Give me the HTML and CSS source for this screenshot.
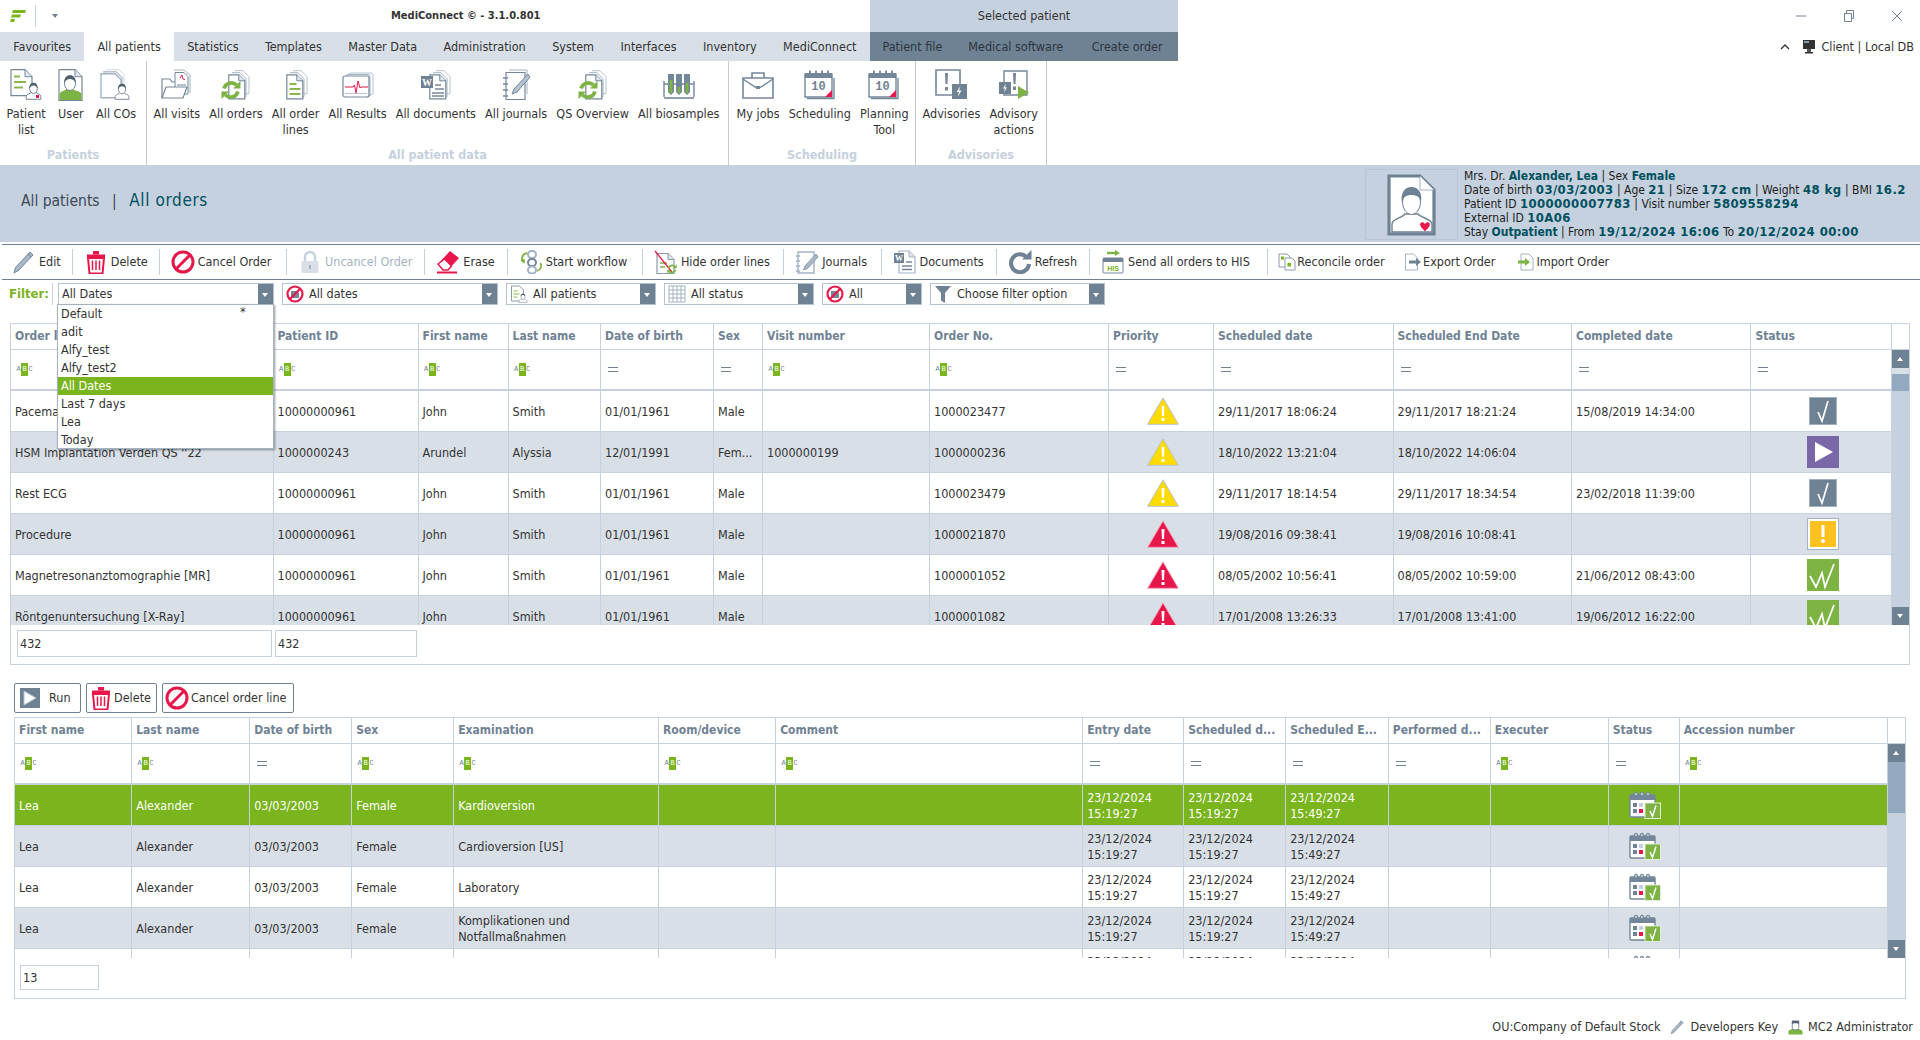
FILE: index.html
```html
<!DOCTYPE HTML>
<html lang="en-US">
<head>
	<meta charset="UTF-8">
	<title>MediConnect</title>
	<link rel="stylesheet" href="styles.css">
</head>
<body>

<!-- icon sheet -->
<svg class="sheet" xmlns="http://www.w3.org/2000/svg">
	<symbol id="person" viewBox="0 0 16 18">
		<path d="M.7 17.3v-3c0-2 4-2.600 5-4h4.600c1 1.400 5 2 5 4v3z" fill="#fff" stroke="#74879a"/>
		<ellipse cx="8" cy="6.500" rx="3.800" ry="5" fill="#fff" stroke="#74879a"/>
		<path d="M4 6.500C3.600 2 6 .8 8 .8s4.400 1.200 4 5.700c-1-2-2-3-4-3s-3 1-4 3z" fill="#4f6070"/>
	</symbol>
	<symbol id="pages" viewBox="0 0 22 30">
		<path d="M7 .7h8l6 6v17h-3" fill="#fff" stroke="#b4c2d0"/>
		<path d="M4 2.700h8l6 6v18h-3" fill="#fff" stroke="#a2b3c3"/>
		<path d="M.8 4.800h10l6 6v18H.8z" fill="#fff" stroke="#74879a" stroke-width="1.200"/>
		<path d="M10.800 4.800v6h6" fill="#dfe6ec" stroke="#74879a"/>
	</symbol>
	<symbol id="sync" viewBox="0 0 20 20">
		<path d="M3 8.500A7.500 7.500 0 0 1 15.500 5" fill="none" stroke="#7cb342" stroke-width="3.600"/>
		<path d="M12 8.500h7.500V1z" fill="#7cb342"/>
		<path d="M17 11.500A7.500 7.500 0 0 1 4.500 15" fill="none" stroke="#7cb342" stroke-width="3.600"/>
		<path d="M8 11.500H.5V19z" fill="#7cb342"/>
	</symbol>
	<symbol id="r-patient" viewBox="0 0 32 32">
		<path d="M1 .7h14l7 7v19H1z" fill="#fff" stroke="#74879a" stroke-width="1.200"/>
		<path d="M15 .7v7h7" fill="#dfe6ec" stroke="#74879a"/>
		<path d="M4 7.500h6M4 13h12M4 18.500h9" stroke="#8ab84a" stroke-width="2"/>
		<use href="#person" x="15" y="13" width="17" height="18"/>
		<rect x="26" y="26" width="3" height="3" fill="#e8174b"/>
	</symbol>
	<symbol id="r-user" viewBox="0 0 32 32">
		<path d="M4 .7h16l7 7v23.600H4z" fill="#fff" stroke="#74879a" stroke-width="1.200"/>
		<path d="M20 .7v7h7" fill="#dfe6ec" stroke="#74879a"/>
		<path d="M4.600 31v-6c0-2.500 5-3 7-5h6c2 2 8.800 2.500 8.800 5v6z" fill="#7cb342"/>
		<ellipse cx="15" cy="14" rx="5.500" ry="7.500" fill="#fff" stroke="#74879a"/>
		<path d="M9.500 14C9 8 12 6.500 15 6.500s6 1.500 5.500 7.500c-1-3-3-4-5.500-4s-4.500 1-5.500 4z" fill="#4f6070"/>
	</symbol>
	<symbol id="r-cos" viewBox="0 0 32 32">
		<path d="M7 .7h12l5 5v18" fill="#fff" stroke="#cfd8e0"/>
		<path d="M4 2.700h12l6 6v18H4z" fill="#fff" stroke="#b4c2d0" stroke-width="1.400"/>
		<path d="M1 4.700h14l6 6v18H1z" fill="#fff" stroke="#a2b3c3" stroke-width="1.400"/>
		<use href="#person" x="14" y="14" width="16" height="17"/>
	</symbol>
	<symbol id="r-visits" viewBox="0 0 32 32">
		<path d="M13 1h10l6 5v18" fill="#fff" stroke="#a2b3c3"/>
		<path d="M1 29V10h8l2 3h12v4" fill="#fff" stroke="#74879a" stroke-width="1.200"/>
		<path d="M14 3.500h9l4 4V25H14z" fill="#fff" stroke="#74879a"/>
		<path d="M16 16h9M16 19h9M16 22h6" stroke="#74879a"/>
		<path d="M19 9l2-3 1 4 2 .5" stroke="#e8174b" fill="none"/>
		<path d="M1 29l4-11h21l-4 11z" fill="#fff" stroke="#74879a" stroke-width="1.200"/>
	</symbol>
	<symbol id="r-orders" viewBox="0 0 32 32">
		<use href="#pages" x="8" y="1" width="22" height="30"/>
		<use href="#sync" x="1" y="11" width="20" height="20"/>
	</symbol>
	<symbol id="r-lines" viewBox="0 0 32 32">
		<use href="#pages" x="6" y="1" width="22" height="30"/>
		<path d="M9.500 15h7M9.500 20h11M9.500 25h11" stroke="#8ab84a" stroke-width="2"/>
	</symbol>
	<symbol id="r-results" viewBox="0 0 32 32">
		<rect x="7" y="4" width="24" height="22" rx="2" fill="#fff" stroke="#b4c2d0"/>
		<rect x="4" y="5.500" width="24" height="22" rx="2" fill="#fff" stroke="#a2b3c3"/>
		<rect x="1" y="7" width="26" height="21" rx="2" fill="#fff" stroke="#74879a" stroke-width="1.200"/>
		<path d="M3 18h8l1.500-2 1.500 8 2-12 2 7 1-1h7" fill="none" stroke="#e8174b"/>
		<path d="M3 24.500h22" stroke="#b4c2d0"/>
	</symbol>
	<symbol id="r-docs" viewBox="0 0 32 32">
		<use href="#pages" x="9" y="1" width="22" height="30"/>
		<rect x="1" y="7" width="12" height="12" fill="#6f8294"/>
		<text x="7" y="16.500" class="w-letter" text-anchor="middle">W</text>
		<path d="M15 16h6M15 20h9M12 24h12M12 27h12" stroke="#74879a" stroke-width="1.300"/>
	</symbol>
	<symbol id="r-journals" viewBox="0 0 32 32">
		<path d="M9 1h18v24" fill="#fff" stroke="#a2b3c3"/>
		<path d="M6 3.500h19v27H6z" fill="#fff" stroke="#74879a" stroke-width="1.200"/>
		<path d="M3 9h5M3 15h5M3 21h5M3 27h5" stroke="#74879a" stroke-width="1.300"/>
		<path d="M28 5L14 20l-2 5 5-2L30 8z" fill="#b4c2d0" stroke="#74879a"/>
	</symbol>
	<symbol id="r-tubes" viewBox="0 0 32 32">
		<path d="M1 28V12M31 28V12M1 15h30" fill="none" stroke="#74879a" stroke-width="1.400"/>
		<path d="M1 29h30" stroke="#74879a" stroke-width="1.600"/>
		<path d="M5 5h6v18l-3 3-3-3zM13 5h6v18l-3 3-3-3zM21 5h6v18l-3 3-3-3z" fill="#74879a"/>
		<path d="M6.500 11h3v12l-1.500 2-1.500-2zM14.500 18h3v5l-1.500 2-1.500-2zM22.500 14h3v9l-1.500 2-1.500-2z" fill="#7cb342"/>
	</symbol>
	<symbol id="r-jobs" viewBox="0 0 32 32">
		<path d="M10 9V4h12v5" fill="none" stroke="#74879a" stroke-width="1.600"/>
		<path d="M1 9h30v20H1z" fill="#fff" stroke="#74879a" stroke-width="1.600"/>
		<path d="M1 10l12 8h6l12-8" fill="none" stroke="#74879a" stroke-width="1.400"/>
		<rect x="14" y="17" width="4" height="3" fill="#74879a"/>
	</symbol>
	<symbol id="r-cal" viewBox="0 0 32 32">
		<path d="M3 29.500h27V9" fill="#fff" stroke="#74879a" stroke-width="1.400"/>
		<path d="M1 5h27v23H1z" fill="#fff" stroke="#74879a" stroke-width="1.400"/>
		<rect x="1" y="4" width="27" height="5" fill="#74879a"/>
		<path d="M6 1.500v5M12 1.500v5M18 1.500v5M24 1.500v5" stroke="#74879a" stroke-width="1.800"/>
		<text x="14.500" y="21" class="cal-num" text-anchor="middle">10</text>
		<path d="M28 21v7h-7z" fill="#e8174b"/>
	</symbol>
	<symbol id="r-adv" viewBox="0 0 32 32">
		<path d="M1 1h24v25H1z" fill="#fff" stroke="#74879a" stroke-width="1.600"/>
		<path d="M10 4h3l-.5 11h-2z" fill="#74879a"/>
		<rect x="10" y="18" width="3" height="3.500" fill="#74879a"/>
		<rect x="17" y="15" width="15" height="15" fill="#6f8294"/>
		<path d="M25.500 17l-4 6h2.500l-1.500 5 4-6.500h-2.500z" fill="#fff"/>
	</symbol>
	<symbol id="r-advact" viewBox="0 0 32 32">
		<path d="M6 2h23v24H6z" fill="#fff" stroke="#74879a" stroke-width="1.400"/>
		<path d="M15 4h3l-.5 11h-2z" fill="#74879a"/>
		<rect x="15" y="17.500" width="3" height="3.500" fill="#74879a"/>
		<rect x="1" y="13" width="12" height="12" fill="#6f8294"/>
		<path d="M8 14.500l-3 5h2l-1 4 3-5H7z" fill="#fff"/>
		<path d="M20 17l11 6.500L20 30z" fill="#7cb342"/>
	</symbol>

	<symbol id="t-edit" viewBox="0 0 24 24">
		<path d="M18 2l3 3L7 20l-5 3 1.500-5.500z" fill="#a9b8c7" stroke="#74879a"/>
		<path d="M16 4l3 3" stroke="#74879a"/>
	</symbol>
	<symbol id="t-trash" viewBox="0 0 24 24">
		<path d="M3 4.500h18v2.500H3z" fill="#e8174b"/>
		<rect x="9" y="1" width="6" height="3.500" fill="#e8174b"/>
		<path d="M4 8h16l-1.500 15.500h-13z" fill="#fff" stroke="#e8174b" stroke-width="2"/>
		<path d="M8.500 10.500v9.500M12 10.500v9.500M15.500 10.500v9.500" stroke="#e8174b" stroke-width="1.500"/>
	</symbol>
	<symbol id="t-cancel" viewBox="0 0 24 24">
		<circle cx="12" cy="12" r="10" fill="#fff" stroke="#e8174b" stroke-width="3"/>
		<path d="M19 5L5 19" stroke="#e8174b" stroke-width="3"/>
	</symbol>
	<symbol id="t-lock" viewBox="0 0 24 24">
		<path d="M7 11V7a5 5 0 0 1 10 0v4" fill="none" stroke="#c5d1de" stroke-width="2.400"/>
		<rect x="3.500" y="11" width="17" height="12" rx="1" fill="#d8dfe7"/>
		<rect x="11" y="15" width="2" height="4" fill="#a2b3c3"/>
	</symbol>
	<symbol id="t-erase" viewBox="0 0 24 24">
		<path d="M2 14L14 1l9 7-11 12H7z" fill="#e8174b"/>
		<path d="M2 14l5 6h5l3.500-4-7-7z" fill="#fff" stroke="#e8174b" stroke-width="1.500"/>
		<path d="M1 22.500h20" stroke="#e8174b" stroke-width="2"/>
	</symbol>
	<symbol id="t-flow" viewBox="0 0 24 24">
		<rect x="9" y="1" width="8" height="7" rx="3.500" fill="none" stroke="#a2b3c3" stroke-width="2"/>
		<rect x="9" y="9" width="8" height="7" rx="3.500" fill="none" stroke="#74879a" stroke-width="2"/>
		<rect x="9" y="16.500" width="8" height="7" rx="3.500" fill="none" stroke="#a2b3c3" stroke-width="2"/>
		<path d="M8 3C3 4 2 9 4 12" fill="none" stroke="#7cb342" stroke-width="1.800"/>
		<path d="M1.500 10l4 4 .5-5z" fill="#7cb342"/>
		<path d="M18 21c4-1 5-5 3.500-8" fill="none" stroke="#7cb342" stroke-width="1.800"/>
	</symbol>
	<symbol id="t-hide" viewBox="0 0 24 24">
		<path d="M3 3.500h11l6 6v14H3z" fill="#fff" stroke="#8a9bac" stroke-width="1.200"/>
		<path d="M14 3.500v6h6" fill="#dfe6ec" stroke="#8a9bac"/>
		<path d="M6 13h7M6 17h5" stroke="#7cb342" stroke-width="1.500"/>
		<path d="M1 1l17 21" stroke="#e8174b" stroke-width="1.300"/>
		<use href="#sync" x="13" y="14" width="10" height="10"/>
	</symbol>
	<symbol id="t-journal" viewBox="0 0 24 24">
		<path d="M3 2h16v21H3z" fill="#fff" stroke="#a2b3c3" stroke-width="1.400"/>
		<path d="M1 6h4M1 11h4M1 16h4M1 21h4" stroke="#a2b3c3" stroke-width="1.300"/>
		<path d="M21 4L10 16l-1.500 4 4-1.500L23 7z" fill="#a9b8c7" stroke="#8a9bac"/>
	</symbol>
	<symbol id="t-doc" viewBox="0 0 24 24">
		<path d="M6 1h10l6 6v16H6z" fill="#fff" stroke="#a2b3c3" stroke-width="1.200"/>
		<path d="M16 1v6h6" fill="#dfe6ec" stroke="#a2b3c3"/>
		<rect x="1" y="3" width="10" height="10" fill="#6f8294"/>
		<text x="6" y="11" class="w-small" text-anchor="middle">W</text>
		<path d="M13 12h6M9 16h10M9 19.500h10" stroke="#74879a" stroke-width="1.300"/>
	</symbol>
	<symbol id="t-refresh" viewBox="0 0 24 24">
		<path d="M19 7.500A9 9 0 1 0 21 14" fill="none" stroke="#6f8294" stroke-width="4"/>
		<path d="M14 9.500h9.500V0z" fill="#6f8294"/>
	</symbol>
	<symbol id="t-send" viewBox="0 0 24 24">
		<path d="M6 3h9" stroke="#7cb342" stroke-width="2.400"/>
		<path d="M14 0l5 3-5 3z" fill="#7cb342"/>
		<rect x="2" y="8" width="20" height="15" rx="1" fill="#fff" stroke="#74879a"/>
		<rect x="2" y="8" width="20" height="4" fill="#6f8294"/>
		<text x="12" y="21" class="his" text-anchor="middle">HIS</text>
	</symbol>
	<symbol id="t-reconcile" viewBox="0 0 18 18">
		<path d="M1 1h8l3 3v10H1z" fill="#fff" stroke="#8a9bac"/>
		<path d="M7 5h7l3 3v9H7z" fill="#fff" stroke="#8a9bac"/>
		<rect x="3" y="3.500" width="3" height="3" fill="#7ab51d"/>
		<rect x="9.500" y="10" width="3.500" height="3.500" fill="#7ab51d"/>
	</symbol>
	<symbol id="t-export" viewBox="0 0 18 18">
		<path d="M1.500 1h8l4 4v12h-12z" fill="#fff" stroke="#a2b3c3"/>
		<path d="M5 7.500h7V5l5 4-5 4v-2.500H5z" fill="#6f8294"/>
	</symbol>
	<symbol id="t-import" viewBox="0 0 18 18">
		<path d="M4 1h8l4 4v12H4z" fill="#fff" stroke="#a2b3c3"/>
		<path d="M1 7.500h7V5l5 4-5 4v-2.500H1z" fill="#7cb342"/>
	</symbol>

	<symbol id="f-none" viewBox="0 0 18 18">
		<circle cx="9" cy="9" r="7.500" fill="#fff" stroke="#e8174b" stroke-width="2.200"/>
		<path d="M5 6h6l2 2v5H5z" fill="#74879a"/>
		<path d="M14 4L4 14" stroke="#e8174b" stroke-width="2.200"/>
	</symbol>
	<symbol id="f-patients" viewBox="0 0 18 18">
		<path d="M1.500 1h8l4 4v11h-12z" fill="#fff" stroke="#8a9bac"/>
		<path d="M3.500 6h4M3.500 9h6M3.500 12h4" stroke="#8ab84a"/>
		<use href="#person" x="8" y="8" width="10" height="10"/>
	</symbol>
	<symbol id="f-status" viewBox="0 0 18 18">
		<rect x="1" y="1" width="16" height="16" fill="#fff" stroke="#a2b3c3"/>
		<path d="M1 5h16M1 9h16M1 13h16M5 1v16M9 1v16M13 1v16" stroke="#a2b3c3"/>
	</symbol>
	<symbol id="f-funnel" viewBox="0 0 18 18">
		<path d="M1 1h16l-6 7v10l-4-2.500V8z" fill="#6f8294"/>
	</symbol>

	<symbol id="s-warn" viewBox="0 0 32 28">
		<path d="M16 .8L31.400 27.300H.6z" fill="#ffdb00" stroke="#b4c2d0"/>
		<path d="M14.500 9h3l-.5 10h-2z" fill="#fff"/>
		<rect x="14.500" y="21" width="3" height="3" fill="#fff"/>
	</symbol>
	<symbol id="s-alert" viewBox="0 0 32 28">
		<path d="M16 .8L31.400 27.300H.6z" fill="#e8174b" stroke="#f3a8bd"/>
		<path d="M14.500 9h3l-.5 10h-2z" fill="#fff"/>
		<rect x="14.500" y="21" width="3" height="3" fill="#fff"/>
	</symbol>
	<symbol id="s-done" viewBox="0 0 32 32">
		<rect x="2.500" y="2.500" width="27" height="27" fill="#6f8294" stroke="#9fb0c0"/>
		<path d="M11 17l4 9 6-20" fill="none" stroke="#fff" stroke-width="1.700"/>
	</symbol>
	<symbol id="s-run" viewBox="0 0 32 32">
		<rect width="32" height="32" fill="#7a67a8"/>
		<path d="M8 6l18 10L8 26z" fill="#fff"/>
	</symbol>
	<symbol id="s-warnbox" viewBox="0 0 32 32">
		<rect x=".5" y=".5" width="31" height="31" fill="#fff" stroke="#a2b3c3"/>
		<rect x="3" y="3" width="26" height="26" fill="#fdc220"/>
		<rect x="14.500" y="7" width="3" height="12" fill="#fff"/>
		<circle cx="16" cy="23" r="2" fill="#fff"/>
	</symbol>
	<symbol id="s-dbl" viewBox="0 0 32 32">
		<rect width="32" height="32" fill="#7cb342"/>
		<path d="M3 17l6 11 6-14 3 14 9-23" fill="none" stroke="#fff" stroke-width="1.800"/>
	</symbol>
	<symbol id="s-cal" viewBox="0 0 32 28">
		<rect x="1" y="4" width="25" height="22" rx="1" fill="#fff" stroke="#74879a" stroke-width="1.400"/>
		<rect x="1" y="4" width="25" height="5" fill="#74879a"/>
		<circle cx="7" cy="3" r="1.800" fill="#b4c2d0" stroke="#74879a"/>
		<circle cx="13" cy="3" r="1.800" fill="#b4c2d0" stroke="#74879a"/>
		<circle cx="19" cy="3" r="1.800" fill="#b4c2d0" stroke="#74879a"/>
		<rect x="4" y="12" width="4" height="4" fill="#6f8294"/>
		<rect x="10" y="12" width="4" height="4" fill="#c5d1de"/>
		<rect x="4" y="18" width="4" height="4" fill="#6f8294"/>
		<rect x="10" y="18" width="4" height="4" fill="#e8174b"/>
		<rect x="16" y="12" width="15.500" height="15.500" fill="#7cb342" stroke="#e4ecd8"/>
		<path d="M21 20l2.500 5.500 3.500-11" fill="none" stroke="#fff" stroke-width="1.400"/>
	</symbol>
	<symbol id="play" viewBox="0 0 20 20">
		<rect width="20" height="20" fill="#6f8294"/>
		<path d="M4 3l12 7-12 7z" fill="#fff" stroke="#b4c2d0"/>
	</symbol>
	<symbol id="admin" viewBox="0 0 16 16">
		<path d="M.5 16v-3c0-2 4-2.500 5-4h5c1 1.500 5 2 5 4v3z" fill="#7cb342"/>
		<path d="M4.500 1.500h7v7c0 1.500-1.500 2.500-3.500 2.500S4.500 10 4.500 8.500z" fill="#fff" stroke="#74879a"/>
		<path d="M4.500 5V1.500h7V5c-1-1-2.500-1-3.500-1S5.500 4 4.500 5z" fill="#4f6070"/>
	</symbol>
</svg>

<div class="titlebar">
	<div class="logo-box">
		<svg class="logo" viewBox="0 0 16 12"><path d="M3 0h13l-1 3H2zM2 4.500h9l-1 3H1zM1 9h4l-1 3H0z" fill="#7ab51d"/></svg>
		<i class="title-sep"></i>
		<i class="qa-arrow"></i>
	</div>
	<div class="app-title">MediConnect © - 3.1.0.801</div>
	<div class="context-head">Selected patient</div>
	<div class="win-btns">
		<svg class="win-ic" viewBox="0 0 12 12"><path d="M1 6h10" stroke="#6f8294"/></svg>
		<svg class="win-ic" viewBox="0 0 12 12"><path d="M1.500 3.500h7v8h-7zM3.500 3V.5h7v8H9" fill="none" stroke="#6f8294"/></svg>
		<svg class="win-ic" viewBox="0 0 12 12"><path d="M1 1l10 10M11 1L1 11" stroke="#6f8294"/></svg>
	</div>
</div>

<div class="tabs">
	<div class="tab">Favourites</div>
	<div class="tab active">All patients</div>
	<div class="tab">Statistics</div>
	<div class="tab">Templates</div>
	<div class="tab">Master Data</div>
	<div class="tab">Administration</div>
	<div class="tab">System</div>
	<div class="tab">Interfaces</div>
	<div class="tab">Inventory</div>
	<div class="tab">MediConnect</div>
	<div class="context-tabs">
		<div class="tab">Patient file</div>
		<div class="tab">Medical software</div>
		<div class="tab">Create order</div>
	</div>
	<div class="conn">
		<svg class="chev" viewBox="0 0 10 6"><path d="M1 5l4-4 4 4" fill="none" stroke="#333" stroke-width="1.400"/></svg>
		<svg class="monitor" viewBox="0 0 14 14"><rect x="1" width="12" height="9" fill="#333"/><rect x="2" y="1" width="5" height="2" fill="#8a9bac"/><rect x="5" y="9" width="4" height="3" fill="#555"/><rect x="3" y="12" width="8" height="1.500" fill="#333"/></svg>
		<span>Client | Local DB</span>
	</div>
</div>

<div class="ribbon">
	<div class="rgroup g-patients">
		<div class="ritems">
			<div class="ritem"><svg class="ric"><use href="#r-patient"/></svg>Patient<br>list</div>
			<div class="ritem"><svg class="ric"><use href="#r-user"/></svg>User</div>
			<div class="ritem"><svg class="ric"><use href="#r-cos"/></svg>All COs</div>
		</div>
		<div class="rlabel">Patients</div>
	</div>
	<div class="rgroup g-data">
		<div class="ritems">
			<div class="ritem"><svg class="ric"><use href="#r-visits"/></svg>All visits</div>
			<div class="ritem"><svg class="ric"><use href="#r-orders"/></svg>All orders</div>
			<div class="ritem"><svg class="ric"><use href="#r-lines"/></svg>All order<br>lines</div>
			<div class="ritem"><svg class="ric"><use href="#r-results"/></svg>All Results</div>
			<div class="ritem"><svg class="ric"><use href="#r-docs"/></svg>All documents</div>
			<div class="ritem"><svg class="ric"><use href="#r-journals"/></svg>All journals</div>
			<div class="ritem"><svg class="ric"><use href="#r-orders"/></svg>QS Overview</div>
			<div class="ritem"><svg class="ric"><use href="#r-tubes"/></svg>All biosamples</div>
		</div>
		<div class="rlabel">All patient data</div>
	</div>
	<div class="rgroup g-sched">
		<div class="ritems">
			<div class="ritem"><svg class="ric"><use href="#r-jobs"/></svg>My jobs</div>
			<div class="ritem"><svg class="ric"><use href="#r-cal"/></svg>Scheduling</div>
			<div class="ritem"><svg class="ric"><use href="#r-cal"/></svg>Planning<br>Tool</div>
		</div>
		<div class="rlabel">Scheduling</div>
	</div>
	<div class="rgroup g-adv">
		<div class="ritems">
			<div class="ritem"><svg class="ric"><use href="#r-adv"/></svg>Advisories</div>
			<div class="ritem"><svg class="ric"><use href="#r-advact"/></svg>Advisory<br>actions</div>
		</div>
		<div class="rlabel">Advisories</div>
	</div>
</div>

<div class="pagebar">
	<div class="crumb">All patients<span class="crumb-sep">|</span><span class="crumb-cur">All orders</span></div>
	<div class="pinfo">
		<div class="pphoto">
			<svg class="pphoto-ic" viewBox="0 0 49 62">
				<path d="M2 2h31l14 14v44H2z" fill="#fff" stroke="#6f8294" stroke-width="3.200"/>
				<path d="M33 2v14h14z" fill="#fff" stroke="#a2b3c3"/>
				<path d="M5 58v-8c0-5 10-6 13-10h13c3 4 14 5 14 10v8z" fill="#fff" stroke="#6f8294" stroke-width="1.400"/>
				<ellipse cx="24.500" cy="28" rx="9" ry="12.500" fill="#fff" stroke="#6f8294"/>
				<path d="M15 29C13 16 20 13 24.500 13S36 16 34 29c-1-6-4-8-9.500-8S16 23 15 29z" fill="#6f8294"/>
				<path d="M38 50c-2.500-3.500-6-1-4.500 2 1 2 3 3.500 4.500 5.500 1.500-2 3.500-3.500 4.500-5.500 1.500-3-2-5.500-4.500-2z" fill="#e8174b"/>
			</svg>
		</div>
		<div class="ptext">
			<div>Mrs. Dr. <b class="nm">Alexander, Lea</b> | Sex <b class="nm">Female</b></div>
			<div>Date of birth <b>03/03/2003</b> | Age <b>21</b> | Size <b>172 cm</b> | Weight <b>48 kg</b> | BMI <b>16.2</b></div>
			<div>Patient ID <b>1000000007783</b> | Visit number <b>5809558294</b></div>
			<div>External ID <b>10A06</b></div>
			<div>Stay <b class="nm">Outpatient</b> | From <b>19/12/2024 16:06</b> To <b>20/12/2024 00:00</b></div>
		</div>
	</div>
</div>

<div class="toolbar">
	<div class="tb-item first-item"><svg class="tic"><use href="#t-edit"/></svg>Edit</div>
	<div class="tb-item"><svg class="tic"><use href="#t-trash"/></svg>Delete</div>
	<div class="tb-item x4"><svg class="tic"><use href="#t-cancel"/></svg>Cancel Order</div>
	<div class="tb-item x1 off"><svg class="tic"><use href="#t-lock"/></svg>Uncancel Order</div>
	<div class="tb-item x1"><svg class="tic"><use href="#t-erase"/></svg>Erase</div>
	<div class="tb-item x4"><svg class="tic"><use href="#t-flow"/></svg>Start workflow</div>
	<div class="tb-item x2"><svg class="tic"><use href="#t-hide"/></svg>Hide order lines</div>
	<div class="tb-item x2"><svg class="tic"><use href="#t-journal"/></svg>Journals</div>
	<div class="tb-item x1"><svg class="tic"><use href="#t-doc"/></svg>Documents</div>
	<div class="tb-item x1"><svg class="tic"><use href="#t-refresh"/></svg>Refresh</div>
	<div class="tb-item x6"><svg class="tic"><use href="#t-send"/></svg>Send all orders to HIS</div>
	<div class="tb-item plain"><svg class="tic-s"><use href="#t-reconcile"/></svg>Reconcile order</div>
	<div class="tb-item plain x2"><svg class="tic-s"><use href="#t-export"/></svg>Export Order</div>
	<div class="tb-item plain"><svg class="tic-s"><use href="#t-import"/></svg>Import Order</div>
</div>

<div class="filterbar">
	<div class="f-label">Filter:</div>
	<div class="combo w216 first"><span>All Dates</span><i class="combo-arrow"></i></div>
	<div class="combo w216"><svg class="fic"><use href="#f-none"/></svg><span>All dates</span><i class="combo-arrow"></i></div>
	<div class="combo w150"><svg class="fic"><use href="#f-patients"/></svg><span>All patients</span><i class="combo-arrow"></i></div>
	<div class="combo w150"><svg class="fic"><use href="#f-status"/></svg><span>All status</span><i class="combo-arrow"></i></div>
	<div class="combo w100"><svg class="fic"><use href="#f-none"/></svg><span>All</span><i class="combo-arrow"></i></div>
	<div class="combo w175"><svg class="fic"><use href="#f-funnel"/></svg><span>Choose filter option</span><i class="combo-arrow"></i></div>

	<div class="dropdown">
		<div class="dd-item">Default<span class="star">*</span></div>
		<div class="dd-item">adit</div>
		<div class="dd-item">Alfy_test</div>
		<div class="dd-item">Alfy_test2</div>
		<div class="dd-item sel">All Dates</div>
		<div class="dd-item">Last 7 days</div>
		<div class="dd-item">Lea</div>
		<div class="dd-item">Today</div>
	</div>
</div>

<!-- orders grid -->
<div class="grid orders">
	<div class="gr head">
		<div>Order line</div><div>Patient ID</div><div>First name</div><div>Last name</div><div>Date of birth</div><div>Sex</div><div>Visit number</div><div>Order No.</div><div>Priority</div><div>Scheduled date</div><div>Scheduled End Date</div><div>Completed date</div><div>Status</div><div></div>
	</div>
	<div class="grid-lower">
		<div class="grid-main">
			<div class="gr filt">
				<div><span class="abc"><i>A</i><b>B</b><i>C</i></span></div><div><span class="abc"><i>A</i><b>B</b><i>C</i></span></div><div><span class="abc"><i>A</i><b>B</b><i>C</i></span></div><div><span class="abc"><i>A</i><b>B</b><i>C</i></span></div><div><span class="eq"></span></div><div><span class="eq"></span></div><div><span class="abc"><i>A</i><b>B</b><i>C</i></span></div><div><span class="abc"><i>A</i><b>B</b><i>C</i></span></div><div><span class="eq"></span></div><div><span class="eq"></span></div><div><span class="eq"></span></div><div><span class="eq"></span></div><div><span class="eq"></span></div>
			</div>
			<div class="grid-body">
				<div class="gr row">
					<div>Pacemaker implantation</div><div>10000000961</div><div>John</div><div>Smith</div><div>01/01/1961</div><div>Male</div><div></div><div>1000023477</div><div class="mid"><svg class="prio"><use href="#s-warn"/></svg></div><div>29/11/2017 18:06:24</div><div>29/11/2017 18:21:24</div><div>15/08/2019 14:34:00</div><div class="mid"><svg class="stat"><use href="#s-done"/></svg></div>
				</div>
				<div class="gr row alt">
					<div>HSM Implantation Verden QS ''22</div><div>1000000243</div><div>Arundel</div><div>Alyssia</div><div>12/01/1991</div><div>Fem...</div><div>1000000199</div><div>1000000236</div><div class="mid"><svg class="prio"><use href="#s-warn"/></svg></div><div>18/10/2022 13:21:04</div><div>18/10/2022 14:06:04</div><div></div><div class="mid"><svg class="stat"><use href="#s-run"/></svg></div>
				</div>
				<div class="gr row">
					<div>Rest ECG</div><div>10000000961</div><div>John</div><div>Smith</div><div>01/01/1961</div><div>Male</div><div></div><div>1000023479</div><div class="mid"><svg class="prio"><use href="#s-warn"/></svg></div><div>29/11/2017 18:14:54</div><div>29/11/2017 18:34:54</div><div>23/02/2018 11:39:00</div><div class="mid"><svg class="stat"><use href="#s-done"/></svg></div>
				</div>
				<div class="gr row alt">
					<div>Procedure</div><div>10000000961</div><div>John</div><div>Smith</div><div>01/01/1961</div><div>Male</div><div></div><div>1000021870</div><div class="mid"><svg class="prio"><use href="#s-alert"/></svg></div><div>19/08/2016 09:38:41</div><div>19/08/2016 10:08:41</div><div></div><div class="mid"><svg class="stat"><use href="#s-warnbox"/></svg></div>
				</div>
				<div class="gr row">
					<div>Magnetresonanztomographie [MR]</div><div>10000000961</div><div>John</div><div>Smith</div><div>01/01/1961</div><div>Male</div><div></div><div>1000001052</div><div class="mid"><svg class="prio"><use href="#s-alert"/></svg></div><div>08/05/2002 10:56:41</div><div>08/05/2002 10:59:00</div><div>21/06/2012 08:43:00</div><div class="mid"><svg class="stat"><use href="#s-dbl"/></svg></div>
				</div>
				<div class="gr row alt">
					<div>Röntgenuntersuchung [X-Ray]</div><div>10000000961</div><div>John</div><div>Smith</div><div>01/01/1961</div><div>Male</div><div></div><div>1000001082</div><div class="mid"><svg class="prio"><use href="#s-alert"/></svg></div><div>17/01/2008 13:26:33</div><div>17/01/2008 13:41:00</div><div>19/06/2012 16:22:00</div><div class="mid"><svg class="stat"><use href="#s-dbl"/></svg></div>
				</div>
			</div>
		</div>
		<div class="vscroll short-thumb">
			<div class="sb-btn up"></div><div class="sb-gap"></div><div class="sb-thumb"></div><div class="sb-track"></div><div class="sb-btn down"></div>
		</div>
	</div>
	<div class="grid-foot orders-foot">
		<div class="sum s1">432</div>
		<div class="sum s2">432</div>
	</div>
</div>

<div class="line-btns">
	<div class="lbtn b-run"><svg class="play-ic"><use href="#play"/></svg>Run</div>
	<div class="lbtn b-del"><svg class="tic"><use href="#t-trash"/></svg>Delete</div>
	<div class="lbtn b-can"><svg class="tic"><use href="#t-cancel"/></svg>Cancel order line</div>
</div>

<!-- order lines grid -->
<div class="grid lines">
	<div class="gr head">
		<div>First name</div><div>Last name</div><div>Date of birth</div><div>Sex</div><div>Examination</div><div>Room/device</div><div>Comment</div><div>Entry date</div><div>Scheduled d...</div><div>Scheduled E...</div><div>Performed d...</div><div>Executer</div><div>Status</div><div>Accession number</div><div></div>
	</div>
	<div class="grid-lower">
		<div class="grid-main">
			<div class="gr filt">
				<div><span class="abc"><i>A</i><b>B</b><i>C</i></span></div><div><span class="abc"><i>A</i><b>B</b><i>C</i></span></div><div><span class="eq"></span></div><div><span class="abc"><i>A</i><b>B</b><i>C</i></span></div><div><span class="abc"><i>A</i><b>B</b><i>C</i></span></div><div><span class="abc"><i>A</i><b>B</b><i>C</i></span></div><div><span class="abc"><i>A</i><b>B</b><i>C</i></span></div><div><span class="eq"></span></div><div><span class="eq"></span></div><div><span class="eq"></span></div><div><span class="eq"></span></div><div><span class="abc"><i>A</i><b>B</b><i>C</i></span></div><div><span class="eq"></span></div><div><span class="abc"><i>A</i><b>B</b><i>C</i></span></div>
			</div>
			<div class="grid-body">
				<div class="gr row sel">
					<div>Lea</div><div>Alexander</div><div>03/03/2003</div><div>Female</div><div>Kardioversion</div><div></div><div></div><div class="wrap">23/12/2024 15:19:27</div><div class="wrap">23/12/2024 15:19:27</div><div class="wrap">23/12/2024 15:49:27</div><div></div><div></div><div class="mid"><svg class="calst"><use href="#s-cal"/></svg></div><div></div>
				</div>
				<div class="gr row alt">
					<div>Lea</div><div>Alexander</div><div>03/03/2003</div><div>Female</div><div>Cardioversion [US]</div><div></div><div></div><div class="wrap">23/12/2024 15:19:27</div><div class="wrap">23/12/2024 15:19:27</div><div class="wrap">23/12/2024 15:49:27</div><div></div><div></div><div class="mid"><svg class="calst"><use href="#s-cal"/></svg></div><div></div>
				</div>
				<div class="gr row">
					<div>Lea</div><div>Alexander</div><div>03/03/2003</div><div>Female</div><div>Laboratory</div><div></div><div></div><div class="wrap">23/12/2024 15:19:27</div><div class="wrap">23/12/2024 15:19:27</div><div class="wrap">23/12/2024 15:49:27</div><div></div><div></div><div class="mid"><svg class="calst"><use href="#s-cal"/></svg></div><div></div>
				</div>
				<div class="gr row alt">
					<div>Lea</div><div>Alexander</div><div>03/03/2003</div><div>Female</div><div class="wrap">Komplikationen und Notfallmaßnahmen</div><div></div><div></div><div class="wrap">23/12/2024 15:19:27</div><div class="wrap">23/12/2024 15:19:27</div><div class="wrap">23/12/2024 15:49:27</div><div></div><div></div><div class="mid"><svg class="calst"><use href="#s-cal"/></svg></div><div></div>
				</div>
				<div class="gr row">
					<div>Lea</div><div>Alexander</div><div>03/03/2003</div><div>Female</div><div>Holter ECG</div><div></div><div></div><div class="wrap">23/12/2024 15:19:27</div><div class="wrap">23/12/2024 15:19:27</div><div class="wrap">23/12/2024 15:49:27</div><div></div><div></div><div class="mid"><svg class="calst"><use href="#s-cal"/></svg></div><div></div>
				</div>
			</div>
		</div>
		<div class="vscroll long-thumb">
			<div class="sb-btn up"></div><div class="sb-thumb"></div><div class="sb-track"></div><div class="sb-btn down"></div>
		</div>
	</div>
	<div class="grid-foot lines-foot">
		<div class="sum s3">13</div>
	</div>
</div>

<div class="statusbar">
	<span>OU:Company of Default Stock</span>
	<span class="st-item"><svg class="st-ic"><use href="#t-edit"/></svg>Developers Key</span>
	<span class="st-item"><svg class="st-ic"><use href="#admin"/></svg>MC2 Administrator</span>
</div>

</body>
</html>
```

FILE: styles.css
```css
*{
	padding:0;
	margin:0;
	box-sizing:border-box;
}
html,body{
	height:1040px;
	overflow:hidden;
}
body{
	background:#fff;
	color:#333;
	font-family:"DejaVu Sans Condensed","DejaVu Sans","Liberation Sans",sans-serif;
	font-stretch:condensed;
	font-size:12.5px;
	line-height:16px;
}
.sheet{
	width:0;
	height:0;
	position:absolute;
}
.w-letter{font:bold 10px "Liberation Serif",serif;fill:#fff;}
.w-small{font:bold 8px "Liberation Serif",serif;fill:#fff;}
.cal-num{font:bold 12px "Liberation Mono",monospace;fill:#6f8294;}
.his{font:bold 7px "Liberation Sans",sans-serif;fill:#7ab51d;}

/* title bar */
.titlebar{
	height:32px;
	display:flex;
	align-items:center;
	position:relative;
}
.logo-box{
	width:391px;
	display:flex;
	align-items:center;
	padding-left:10px;
}
.logo{width:16px;height:12px;}
.title-sep{
	width:1px;
	height:22px;
	background:#c5d1de;
	margin-left:9px;
}
.qa-arrow{
	margin-left:16px;
	border:3.5px solid transparent;
	border-top:4px solid #6f8294;
	border-bottom:0;
}
.app-title{
	width:479px;
	font-weight:bold;
	font-size:11px;
}
.context-head{
	width:308px;
	height:32px;
	line-height:31px;
	background:#c5d1de;
	text-align:center;
}
.win-btns{
	margin-left:auto;
	display:flex;
	gap:36px;
	padding-right:17px;
}
.win-ic{width:12px;height:12px;}

/* tabs */
.tabs{
	height:29px;
	display:flex;
	background:linear-gradient(to right,#d8dfe7 870px,#fff 870px);
	line-height:29px;
}
.tab{padding:0 13.2px;}
.tab.active{background:#fff;}
.context-tabs{
	display:flex;
	background:#6f8294;
	margin-left:auto;
	width:308px;
}
.context-tabs .tab{color:#2b3540;padding:0 13.5px 0 12.5px;}
.context-tabs .tab:last-child{padding-left:15px;}
.conn{
	width:742px;
	display:flex;
	align-items:center;
	justify-content:flex-end;
	padding-right:6px;
	white-space:nowrap;
}
.chev{width:10px;height:6px;margin-right:12px;}
.monitor{width:14px;height:14px;margin-right:5px;}

/* ribbon */
.ribbon{
	height:104px;
	display:flex;
}
.rgroup{
	border-right:1px solid #c9c9c9;
	display:flex;
	flex-direction:column;
	justify-content:space-between;
}
.g-patients{width:147px;}
.g-data{width:582px;}
.g-sched{width:187px;}
.g-adv{width:131px;}
.ritems{
	display:flex;
	padding:8px 0 0 2px;
}
.g-sched .ritems{padding-left:3px;}
.ritem{
	padding:0 4.6px;
	text-align:center;
	white-space:nowrap;
}
.ric{
	display:block;
	width:32px;
	height:32px;
	margin:0 auto 5px;
}
.rlabel{
	height:20px;
	line-height:20px;
	text-align:center;
	font-weight:bold;
	color:#c5d1de;
}

/* page header */
.pagebar{
	height:77px;
	background:#c5d1de;
	display:flex;
	justify-content:space-between;
	padding:4px 9px 0 21px;
}
.crumb{
	font-size:15.5px;
	line-height:22px;
	margin-top:20px;
	color:#3d4a57;
}
.crumb-sep{margin:0 12.5px;}
.crumb-cur{
	color:#00505f;
	font-size:17px;
	letter-spacing:.6px;
}
.pinfo{
	display:flex;
	gap:6px;
}
.pphoto{
	width:93px;
	height:71px;
	border:1px solid #b7c6d5;
	display:flex;
	align-items:center;
	justify-content:center;
}
.pphoto-ic{width:49px;height:62px;}
.ptext{
	width:447px;
	line-height:14px;
	white-space:nowrap;
	color:#1d1d1d;
	font-size:12px;
}
.ptext b{
	color:#00505f;
	font-weight:bold;
	font-size:13px;
	letter-spacing:.4px;
}
.ptext b.nm{
	font-size:12px;
	letter-spacing:0;
}

/* toolbar */
.toolbar{
	height:36px;
	margin:2px 0 0 2px;
	border-top:1px solid #6f8294;
	border-bottom:1px solid #6f8294;
	display:flex;
	align-items:center;
}
.tb-item{
	display:flex;
	align-items:center;
	gap:3px;
	height:26px;
	padding:0 11px;
	border-right:1px solid #c5d1de;
	white-space:nowrap;
}
.tb-item.first-item{padding-left:10px;}
.tb-item.x1{padding-right:12px;}
.tb-item.x2{padding-right:13.5px;}
.tb-item.x4{padding-right:14.7px;}
.tb-item.x6{padding-right:17px;}
.tb-item.off{color:#a2b3c3;}
.tb-item.plain{
	border-right:0;
	padding:0 9px 0 10px;
	gap:1.5px;
}
.tb-item.plain.x2{padding-right:11.5px;}
.tic{width:24px;height:24px;}
.tic-s{width:18px;height:18px;}

/* filter row */
.filterbar{
	height:43px;
	padding:3px 0 0 9px;
	display:flex;
	align-items:flex-start;
	gap:8px;
	position:relative;
}
.f-label{
	width:44px;
	height:22px;
	line-height:22px;
	font-weight:bold;
	color:#7ab51d;
	font-size:13px;
	border-right:1px solid #c5d1de;
	margin-right:-3px;
}
.combo{
	height:22px;
	border:1px solid #b4c2d0;
	display:flex;
	align-items:center;
	padding-left:3px;
	gap:5px;
}
.combo span{flex:1;}
.w216{width:216px;}
.w150{width:150px;}
.w100{width:100px;}
.w175{width:175px;}
.fic{width:18px;height:18px;}
.combo-arrow{
	width:15px;
	height:20px;
	background:#6f8294;
	position:relative;
}
.combo-arrow:after{
	content:"";
	position:absolute;
	left:4px;
	top:9px;
	border:3.5px solid transparent;
	border-top:4px solid #fff;
	border-bottom:0;
}
.dropdown{
	position:absolute;
	left:57px;
	top:24px;
	width:217px;
	height:145px;
	background:#fff;
	border:1px solid #a2b3c3;
	box-shadow:1px 1px 2px rgba(0,0,0,.4);
	z-index:5;
}
.dd-item{
	height:18px;
	line-height:18px;
	padding-left:3px;
	position:relative;
}
.dd-item.sel{
	background:#7ab51d;
	color:#fff;
}
.star{
	position:absolute;
	left:182px;
	top:-2px;
}

/* grids */
.grid{border:1px solid #c5d1de;}
.orders{
	margin:0 10px;
	height:342px;
	--cols:262.5px 145px 90px 92.5px 113px 49px 167px 179px 105px 179.5px 178.5px 179.4px 140.6px;
}
.lines{
	margin:0 14px;
	height:282px;
	--cols:117.2px 118px 102px 102px 204.8px 117.2px 307px 101px 102px 102.6px 102px 118px 71px 208.4px;
}
.gr{
	display:grid;
	grid-template-columns:var(--cols);
}
.gr > div{
	border-right:1px solid #c5d1de;
	padding:0 4px;
	display:flex;
	align-items:center;
	min-width:0;
	overflow:hidden;
	white-space:nowrap;
}
.head{
	grid-template-columns:var(--cols) 17px;
	height:26px;
	border-bottom:1px solid #c5d1de;
	color:#6f8294;
	font-weight:bold;
	font-size:12px;
}
.head > div{
	display:block;
	line-height:24px;
	text-overflow:ellipsis;
}
.head > div:last-child{border-right:0;}
.filt{
	height:41px;
	border-bottom:2px solid #c5d1de;
}
.grid-lower{display:flex;}
.grid-main{
	flex:1;
	min-width:0;
}
.orders .grid-body{height:234px;overflow:hidden;}
.lines .grid-body{height:173px;overflow:hidden;}
.row{
	height:41px;
	border-bottom:1px solid #c5d1de;
}
.row.alt{background:#d8dfe7;}
.row.sel{
	background:#7ab51d;
	color:#fff;
}
.gr.row > div{padding-top:2px;}
.gr.row > .mid{
	justify-content:center;
	padding:0 2px 0 5px;
}
.gr > .wrap{white-space:normal;}
.abc{
	display:flex;
	align-items:center;
	height:13px;
	font:normal 7px/13px "Liberation Mono",monospace;
	color:#6f8294;
	margin-left:1px;
}
.abc i{font-style:normal;width:5px;text-align:center;}
.abc b{
	width:7px;
	text-align:center;
	background:#7ab51d;
	color:#fff;
	font-weight:normal;
}
.eq{
	display:block;
	width:10px;
	height:5px;
	border-top:1px solid #6f8294;
	border-bottom:1px solid #6f8294;
	margin-left:3px;
}
.prio{width:32px;height:28px;}
.stat{width:32px;height:32px;}
.calst{width:32px;height:28px;}

/* scrollbars */
.vscroll{
	width:17px;
	display:flex;
	flex-direction:column;
	background:#fff;
}
.sb-btn{
	height:18px;
	background:#6f8294;
	position:relative;
}
.sb-btn:after{
	content:"";
	position:absolute;
	left:5px;
	top:7px;
	border:3.5px solid transparent;
}
.sb-btn.up:after{border-bottom:4px solid #fff;border-top:0;}
.sb-btn.down:after{border-top:4px solid #fff;border-bottom:0;}
.sb-gap{height:6px;background:#d8dfe7;}
.sb-thumb{background:#92a9c0;}
.short-thumb .sb-thumb{height:17px;}
.long-thumb .sb-thumb{height:51px;}
.sb-track{flex:1;background:#c5d1de;}

/* footers */
.grid-foot{
	display:flex;
	gap:3px;
}
.orders-foot{padding:5px 0 0 6px;}
.lines-foot{padding:7px 0 0 5px;}
.sum{
	height:27px;
	line-height:25px;
	border:1px solid #c5d1de;
	padding-left:2px;
}
.s1{width:255px;}
.s2{width:142px;}
.s3{width:79px;height:25px;line-height:23px;}

/* order line buttons */
.line-btns{
	display:flex;
	gap:5px;
	margin:18px 0 4px 14px;
}
.lbtn{
	height:30px;
	border:1px solid #6f8294;
	border-radius:2px;
	display:flex;
	align-items:center;
	white-space:nowrap;
}
.b-run{width:67px;padding-left:5px;gap:9px;}
.b-del{width:71px;padding-left:2px;gap:1px;}
.b-can{width:132px;padding-left:2px;gap:2px;}
.play-ic{width:20px;height:20px;}

/* status bar */
.statusbar{
	display:flex;
	justify-content:flex-end;
	align-items:center;
	gap:10px;
	padding-right:7px;
	margin-top:19px;
	height:18px;
	white-space:nowrap;
}
.st-item{
	display:flex;
	align-items:center;
	gap:5px;
}
.st-ic{width:15px;height:16px;}
```
